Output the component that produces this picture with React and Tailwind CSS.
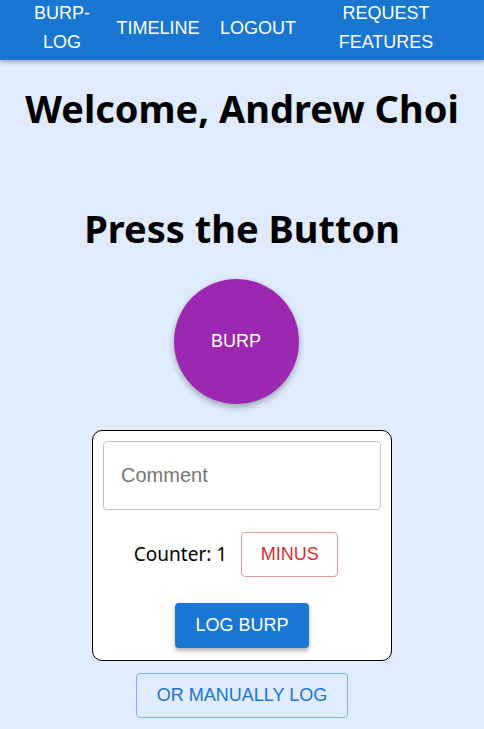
import React, { useState } from "react";

function App() {
  const [counter, setCounter] = useState(1);
  const [comment, setComment] = useState("");

  const navFont = { fontFamily: '"Liberation Sans", Arial, sans-serif' };

  return (
    <div className="min-h-screen w-full bg-[#e0ebfd] flex flex-col items-center" style={{ fontFamily: '"Noto Sans", sans-serif' }}>
      <nav
        className="w-full h-[60px] bg-[#1976d2] shadow-[0_2px_4px_rgba(0,0,0,0.3)] flex items-center pb-[4px] text-white text-[18px] leading-[29px] uppercase"
        style={navFont}
      >
        <button className="ml-[22px] w-[80px] text-center">BURP-LOG</button>
        <button className="w-[112px] text-center">TIMELINE</button>
        <button className="w-[88px] text-center">LOGOUT</button>
        <button className="ml-[24px] w-[120px] text-center">REQUEST FEATURES</button>
      </nav>

      <h1 className="mt-[20px] text-[38px] font-bold leading-[56px] text-black">Welcome, Andrew Choi</h1>
      <h2 className="mt-[64px] text-[38px] font-bold leading-[56px] text-black">Press the Button</h2>

      <button
        className="mt-[23px] mr-[12px] w-[125px] h-[125px] rounded-full bg-[#9c27b0] text-white text-[18px] shadow-[0_3px_6px_rgba(0,0,0,0.3)]"
        style={navFont}
        onClick={() => setCounter(counter + 1)}
      >
        BURP
      </button>

      <div className="mt-[26px] w-[300px] bg-white border border-black rounded-[10px] px-[10px] pt-[10px] pb-[12px] flex flex-col items-center">
        <input
          value={comment}
          onChange={(e) => setComment(e.target.value)}
          placeholder="Comment"
          className="w-full h-[69px] border border-[#c4c4c4] rounded-[4px] px-[17px] text-[20px] placeholder:text-[#757575] outline-none"
          style={navFont}
        />
        <div className="mt-[22px] mr-[12px] flex items-center gap-[14px]">
          <span className="text-[19px] text-black">Counter: {counter}</span>
          <button
            className="w-[97px] h-[45px] border border-[#e79898] rounded-[4px] text-[#d32f2f] text-[18px]"
            style={navFont}
            onClick={() => setCounter(counter - 1)}
          >
            MINUS
          </button>
        </div>
        <button
          className="mt-[26px] w-[134px] h-[45px] bg-[#1976d2] rounded-[4px] text-white text-[18px] shadow-[0_3px_4px_rgba(0,0,0,0.3)]"
          style={navFont}
        >
          LOG BURP
        </button>
      </div>

      <button
        className="mt-[12px] w-[212px] h-[45px] border border-[#7fb0e8] rounded-[4px] text-[#1976d2] text-[18px]"
        style={navFont}
      >
        OR MANUALLY LOG
      </button>
    </div>
  );
}

export default App;
